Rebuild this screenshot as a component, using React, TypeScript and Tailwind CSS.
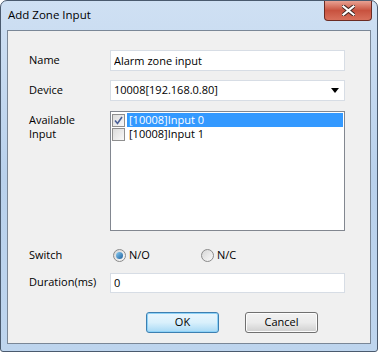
import React, { useState } from 'react';

const font = { fontFamily: '"Segoe UI", "Open Sans", "Noto Sans", sans-serif' };

const App: React.FC = () => {
  const [name, setName] = useState('Alarm zone input');
  const [duration, setDuration] = useState('0');
  const [sw, setSw] = useState<'no' | 'nc'>('no');
  const [checked, setChecked] = useState([true, false]);

  return (
    <div className="w-[378px] h-[352px] bg-white" style={font}>
      <div className="w-[378px] h-[352px] rounded-t-[7px] rounded-b-[3px] border border-[#4a5a6e] bg-gradient-to-b from-[#cfe0f3] via-[#b9d1ec] to-[#bed5ee] flex flex-col text-[11px] text-black">
        {/* title bar */}
        <div className="h-[29px] flex items-start justify-between">
          <div className="pl-[7px] pt-[6px] text-[11.5px] leading-[16px] text-black">Add Zone Input</div>
          <div className="mr-[5px] w-[48px] h-[20px] rounded-b-[4px] border border-t-0 border-[#6b2b23] bg-gradient-to-b from-[#e8a193] via-[#c8523f] to-[#d8705c] flex items-center justify-center">
            <svg width="13" height="11" viewBox="0 0 13 11">
              <path d="M1 1 L12 10 M12 1 L1 10" stroke="#3c2320" strokeWidth="4" strokeLinecap="square" />
              <path d="M1.5 1.5 L11.5 9.5 M11.5 1.5 L1.5 9.5" stroke="#ffffff" strokeWidth="2.2" strokeLinecap="square" />
            </svg>
          </div>
        </div>

        {/* client area */}
        <div className="mx-[6px] h-[314px] border border-[#7a8797] bg-[#f0f0f0] pl-[21px] pr-[25px] pt-[19px]">
          <div className="flex items-center h-[21px]">
            <div className="w-[81px]">Name</div>
            <input
              value={name}
              onChange={e => setName(e.target.value)}
              className="w-[235px] h-[21px] bg-white border border-[#d7dde5] px-[3px] text-[11px] outline-none"
            />
          </div>

          <div className="flex items-center h-[21px] mt-[9px]">
            <div className="w-[81px]">Device</div>
            <div className="w-[235px] h-[21px] bg-white border border-[#d7dde5] px-[3px] flex items-center justify-between">
              <span>10008[192.168.0.80]</span>
              <svg width="8" height="5" viewBox="0 0 8 5" className="mr-[2px]">
                <path d="M0 0 H8 L4 5 Z" fill="#000" />
              </svg>
            </div>
          </div>

          <div className="flex items-start mt-[10px]">
            <div className="w-[81px] leading-[14px] pt-[2px]">Available<br />Input</div>
            <div className="w-[235px] h-[120px] bg-white border border-[#828790] p-[1px]">
              {['[10008]Input 0', '[10008]Input 1'].map((t, i) => (
                <div key={t} className="flex items-center h-[14px]">
                  <button
                    onClick={() => setChecked(c => c.map((v, j) => (j === i ? !v : v)))}
                    className="w-[13px] h-[13px] border border-[#8f8f8f] bg-gradient-to-br from-[#dcdcdc] to-[#f8f8f8] flex items-center justify-center mr-[2px]"
                  >
                    {checked[i] && (
                      <svg width="9" height="9" viewBox="0 0 9 9">
                        <path d="M1 4.5 L3.5 7.5 L8 1" stroke="#4a5f97" strokeWidth="1.6" fill="none" />
                      </svg>
                    )}
                  </button>
                  <div className={`flex-1 h-[14px] leading-[14px] pl-[2px] ${i === 0 ? 'bg-[#3399ff] text-white' : ''}`}>{t}</div>
                </div>
              ))}
            </div>
          </div>

          <div className="flex items-center h-[16px] mt-[16px]">
            <div className="w-[84px]">Switch</div>
            <label className="flex items-center w-[88px] cursor-default" onClick={() => setSw('no')}>
              <span className="w-[13px] h-[13px] rounded-full border border-[#8a8a8a] bg-gradient-to-br from-[#d6d6d6] to-[#fafafa] flex items-center justify-center mr-[3px]">
                {sw === 'no' && <span className="w-[7px] h-[7px] rounded-full bg-gradient-to-br from-[#8cd0f5] to-[#1a5f9c]" />}
              </span>
              N/O
            </label>
            <label className="flex items-center cursor-default" onClick={() => setSw('nc')}>
              <span className="w-[13px] h-[13px] rounded-full border border-[#8a8a8a] bg-gradient-to-br from-[#d6d6d6] to-[#fafafa] flex items-center justify-center mr-[3px]">
                {sw === 'nc' && <span className="w-[7px] h-[7px] rounded-full bg-gradient-to-br from-[#8cd0f5] to-[#1a5f9c]" />}
              </span>
              N/C
            </label>
          </div>

          <div className="flex items-center h-[21px] mt-[9px]">
            <div className="w-[81px]">Duration(ms)</div>
            <input
              value={duration}
              onChange={e => setDuration(e.target.value)}
              className="w-[235px] h-[20px] bg-white border border-[#d7dde5] px-[3px] text-[11px] outline-none"
            />
          </div>

          <div className="flex mt-[19px] pl-[117px] gap-[26px]">
            <button className="w-[73px] h-[21px] rounded-[3px] border border-[#3c7fb1] bg-gradient-to-b from-[#eaf6fd] via-[#d9f0fc] to-[#a7d9f5] shadow-[inset_0_0_0_1px_#8ed2f7]">OK</button>
            <button className="w-[73px] h-[21px] rounded-[3px] border border-[#707070] bg-gradient-to-b from-[#f2f2f2] via-[#ebebeb] to-[#cfcfcf] shadow-[inset_0_0_0_1px_#fcfcfc]">Cancel</button>
          </div>
        </div>
      </div>
    </div>
  );
};

export default App;
